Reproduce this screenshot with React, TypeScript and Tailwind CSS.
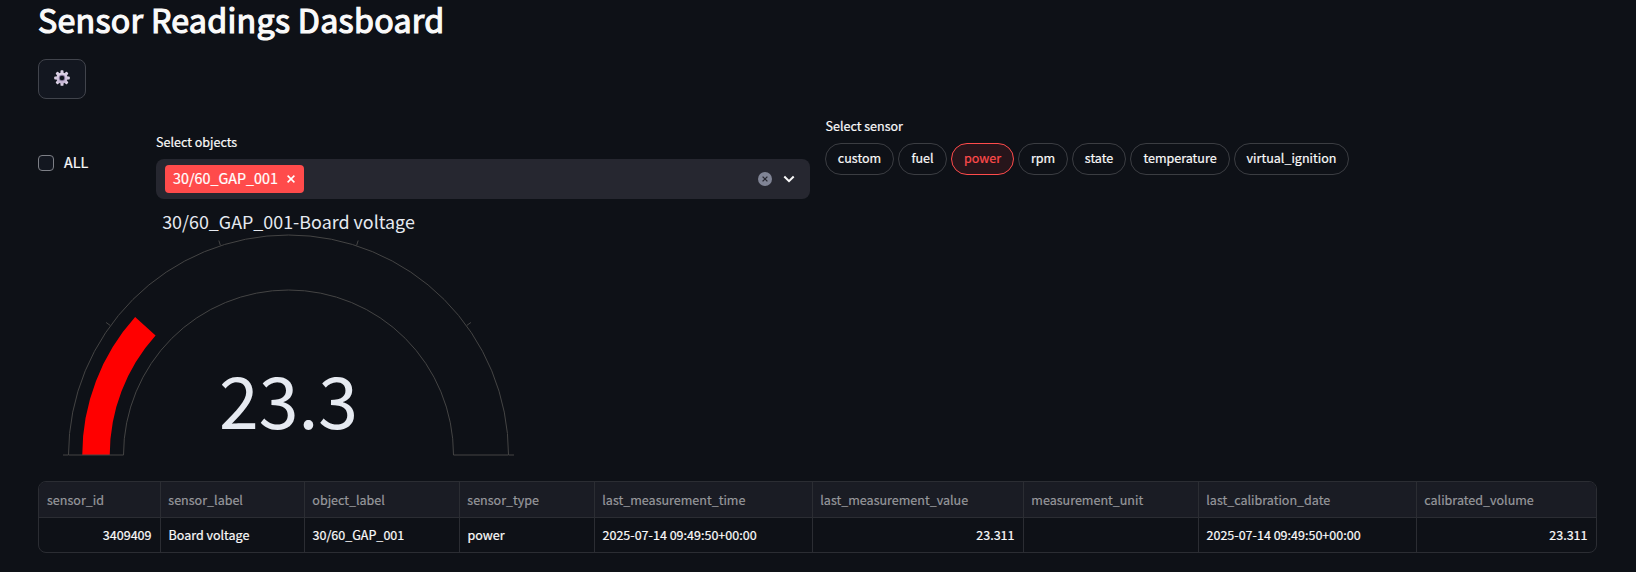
const sensors = ["custom", "fuel", "power", "rpm", "state", "temperature", "virtual_ignition"];

const pillWidths: Record<string, string> = {
  custom: "w-[69px]",
  fuel: "w-[49px]",
  power: "w-[63px]",
  rpm: "w-[50px]",
  state: "w-[54px]",
  temperature: "w-[100px]",
  virtual_ignition: "w-[115px]",
};

const columns = [
  { name: "sensor_id", value: "3409409", width: "w-[122px]", numeric: true },
  { name: "sensor_label", value: "Board voltage", width: "w-[144px]" },
  { name: "object_label", value: "30/60_GAP_001", width: "w-[155px]" },
  { name: "sensor_type", value: "power", width: "w-[135px]" },
  { name: "last_measurement_time", value: "2025-07-14 09:49:50+00:00", width: "w-[218px]" },
  { name: "last_measurement_value", value: "23.311", width: "w-[211px]", numeric: true },
  { name: "measurement_unit", value: "", width: "w-[175px]" },
  { name: "last_calibration_date", value: "2025-07-14 09:49:50+00:00", width: "w-[218px]" },
  { name: "calibrated_volume", value: "23.311", width: "w-[179px]", numeric: true },
];

const CX = 250.5;
const CY = 249;

function point(radius: number, value: number) {
  const a = Math.PI * (1 - value / 100);
  return `${(CX + radius * Math.cos(a)).toFixed(2)} ${(CY - radius * Math.sin(a)).toFixed(2)}`;
}

function band(outer: number, inner: number, value: number) {
  return `M${point(outer, 0)}A${outer} ${outer} 0 0 1 ${point(outer, value)}L${point(inner, value)}A${inner} ${inner} 0 0 0 ${point(inner, 0)}Z`;
}

function Gear() {
  return (
    <svg width="16" height="16" viewBox="-8 -8 16 16" className="-mt-[2px]">
      <defs>
        <linearGradient id="metal" x1="0" y1="0" x2="0" y2="1">
          <stop offset="0" stopColor="#e2d9ea" />
          <stop offset="1" stopColor="#c3b3d2" />
        </linearGradient>
      </defs>
      <g fill="url(#metal)">
        {[0, 45, 90, 135, 180, 225, 270, 315].map((a) => (
          <rect key={a} x="-1.5" y="-7.8" width="3" height="5" rx="0.9" transform={`rotate(${a})`} />
        ))}
        <circle r="5.6" />
      </g>
      <circle r="3.2" fill="#8f7fa3" />
      <circle r="2.3" fill="#131720" />
    </svg>
  );
}

function Gauge() {
  return (
    <svg width="500" height="268" viewBox="0 0 500 268" className="block">
      <path d={band(206.25, 178.75, 23.311)} fill="#ff0000" />
      <path d={band(220, 165, 100)} fill="none" stroke="#444444" strokeWidth="1" />
      {[0, 20, 40, 60, 80, 100].map((v) => (
        <path key={v} d={`M${point(220.5, v)}L${point(225.5, v)}`} stroke="#444444" />
      ))}
      <text x={CX} y="23" textAnchor="middle" fontSize="17.9" fill="#e6eaf1">
        30/60_GAP_001-Board voltage
      </text>
      <text x="250.5" y="223" textAnchor="middle" fontSize="71.6" fill="#e6eaf1">
        23.3
      </text>
    </svg>
  );
}

export default function App() {
  return (
    <main className="h-[572px] w-[1636px] overflow-hidden bg-[#0e1117] pl-[38px] font-['Noto_Sans_CJK_SC','Source_Sans_Pro',sans-serif] text-[12.54px] text-[#fafafa]">
      <h1 className="h-[59px] text-[32.2px] leading-[38px] font-normal tracking-[0.28px] whitespace-nowrap [-webkit-text-stroke:1.2px_#fafafa]">
        Sensor Readings Dasboard
      </h1>
      <button className="flex h-10 w-12 items-center justify-center rounded-lg border border-[#41444c] bg-[#131720]">
        <Gear />
      </button>

      <div className="flex h-[107px] [-webkit-text-stroke:0.2px_currentColor]">
        <label className="mt-14 flex h-4 w-[118px] items-center gap-[10px] text-[14.33px]">
          <span className="block size-4 rounded-[4px] border border-[#7d7f86] bg-[#131720]" />
          <span className="-mt-[2px] leading-4">ALL</span>
        </label>
        <section className="w-[654px] pt-8">
          <div className="h-7 leading-[22px]">Select objects</div>
          <div className="flex h-10 items-center rounded-lg bg-[#262730] pr-[15px] pl-[9px]">
            <span className="flex h-7 w-[139px] items-center justify-between rounded-[4px] bg-[#ff4b4b] pr-[9px] pl-2 text-[14.33px] text-white">
              <span className="-mt-[2px]">30/60_GAP_001</span>
              <svg width="8" height="8" viewBox="0 0 8 8" stroke="#fff" strokeWidth="1.5">
                <path d="M0.6 0.6L7.4 7.4M7.4 0.6L0.6 7.4" />
              </svg>
            </span>
            <svg className="ml-auto" width="14" height="14" viewBox="0 0 14 14">
              <circle cx="7" cy="7" r="7" fill="#808495" />
              <path d="M4.6 4.6L9.4 9.4M9.4 4.6L4.6 9.4" stroke="#262730" strokeWidth="1.3" />
            </svg>
            <svg className="ml-[11px]" width="12" height="8" viewBox="0 0 12 8" fill="none" stroke="#fafafa" strokeWidth="2">
              <path d="M1.3 1.5L6 6.2L10.7 1.5" />
            </svg>
          </div>
        </section>
        <section className="ml-[15px] pt-4">
          <div className="h-7 pl-[0.5px] leading-[22px]">Select sensor</div>
          <div className="flex gap-1">
            {sensors.map((s) => (
              <button
                key={s}
                className={`flex h-8 items-center justify-center rounded-full border pb-px ${pillWidths[s]} ${
                  s === "power" ? "border-[#ff4b4b] bg-[#27151b] text-[#ff4b4b]" : "border-[#3b3d42]"
                }`}
              >
                {s}
              </button>
            ))}
          </div>
        </section>
      </div>

      <Gauge />

      <div className="mt-[7px] flex w-[1559px] overflow-hidden rounded-lg border border-[#2b2d33] [-webkit-text-stroke:0.2px_currentColor]">
        {columns.map((c, i) => (
          <div key={c.name} className={`shrink-0 ${c.width} ${i < columns.length - 1 ? "border-r border-[#2b2d33]" : ""}`}>
            <div className={`flex h-[36px] items-center border-b border-[#2b2d33] bg-[#1a1c24] pt-px text-[#97989c] ${i === 0 ? "pl-2" : "pl-[7.3px]"}`}>
              {c.name}
            </div>
            <div className={`flex h-[34px] items-center pr-[8.5px] pl-[7.5px] ${c.numeric ? "justify-end" : ""}`}>{c.value}</div>
          </div>
        ))}
      </div>
    </main>
  );
}
